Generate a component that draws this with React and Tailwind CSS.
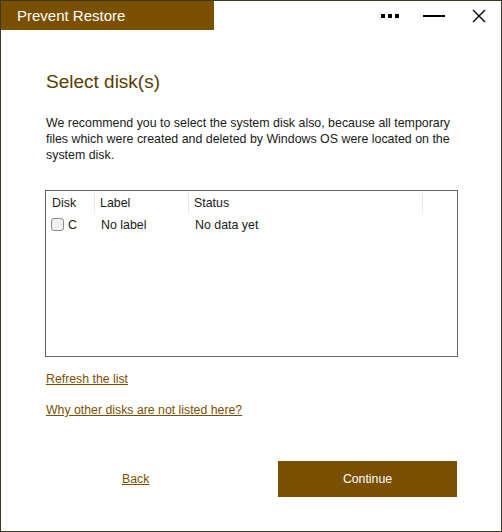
export default function App() {
  const font = { fontFamily: '"Liberation Sans", Arial, sans-serif' };
  return (
    <div className="w-[502px] h-[532px] bg-white border border-[#3b3a22] flex flex-col" style={font}>
      {/* title bar */}
      <div className="flex items-start h-[29px] shrink-0">
        <div className="w-[213px] h-[29px] bg-[#7a5000] text-white text-[15px] leading-[29px] pl-[16px]">Prevent Restore</div>
        <div className="flex-1" />
        <div className="flex items-center h-[29px] pr-[15px]">
          <div className="flex gap-[3px] mr-[24px] mt-[1px]">
            <span className="block w-[4px] h-[4px] bg-black" />
            <span className="block w-[4px] h-[4px] bg-black" />
            <span className="block w-[4px] h-[4px] bg-black" />
          </div>
          <span className="block w-[22px] h-[2px] bg-black mr-[27px]" />
          <svg width="14" height="14" viewBox="0 0 14 14" className="mt-[1px]">
            <path d="M1 1L13 13M13 1L1 13" stroke="#000" strokeWidth="1.4" />
          </svg>
        </div>
      </div>

      <div className="flex-1 flex flex-col px-[44px]">
        <h1 className="mt-[41px] ml-[1px] text-[19px] leading-[22px] text-[#5a3c00]">Select disk(s)</h1>
        <p className="mt-[22px] ml-[1px] text-[12.4px] leading-[16px] text-[#1a1a1a]">
          We recommend you to select the system disk also, because all temporary files which were created and deleted by Windows OS were located on the system disk.
        </p>

        <div className="mt-[27px] w-[413px] h-[167px] pt-[1px] border border-[#646464] text-[12.4px] text-[#1a1a1a]">
          <div className="flex h-[22px]">
            <div className="w-[49px] pl-[6px] border-r border-[#e6e6e6] my-[1px] leading-[20px]">Disk</div>
            <div className="w-[94px] pl-[5px] border-r border-[#e6e6e6] my-[1px] leading-[20px]">Label</div>
            <div className="w-[234px] pl-[5px] border-r border-[#e6e6e6] my-[1px] leading-[20px]">Status</div>
            <div className="flex-1" />
          </div>
          <div className="flex h-[22px] items-center">
            <div className="w-[50px] pl-[5px] flex items-center">
              <span className="block w-[13px] h-[13px] rounded-[3px] border border-[#8a8a8a] bg-[#f0f0f0]" />
              <span className="ml-[4px]">C</span>
            </div>
            <div className="w-[94px] pl-[5px]">No label</div>
            <div className="w-[234px] pl-[5px]">No data yet</div>
          </div>
        </div>

        <a className="mt-[14px] ml-[1px] text-[12.3px] leading-[16px] text-[#7a5000] underline self-start">Refresh the list</a>
        <a className="mt-[15px] ml-[1px] text-[12.3px] leading-[16px] text-[#7a5000] underline self-start">Why other disks are not listed here?</a>

        <div className="mt-[43px] flex items-center">
          <a className="ml-[77px] text-[12.3px] text-[#7a5000] underline">Back</a>
          <div className="flex-1" />
          <button className="w-[179px] h-[36px] bg-[#7a5000] text-white text-[12.3px]">Continue</button>
        </div>
      </div>
    </div>
  );
}
